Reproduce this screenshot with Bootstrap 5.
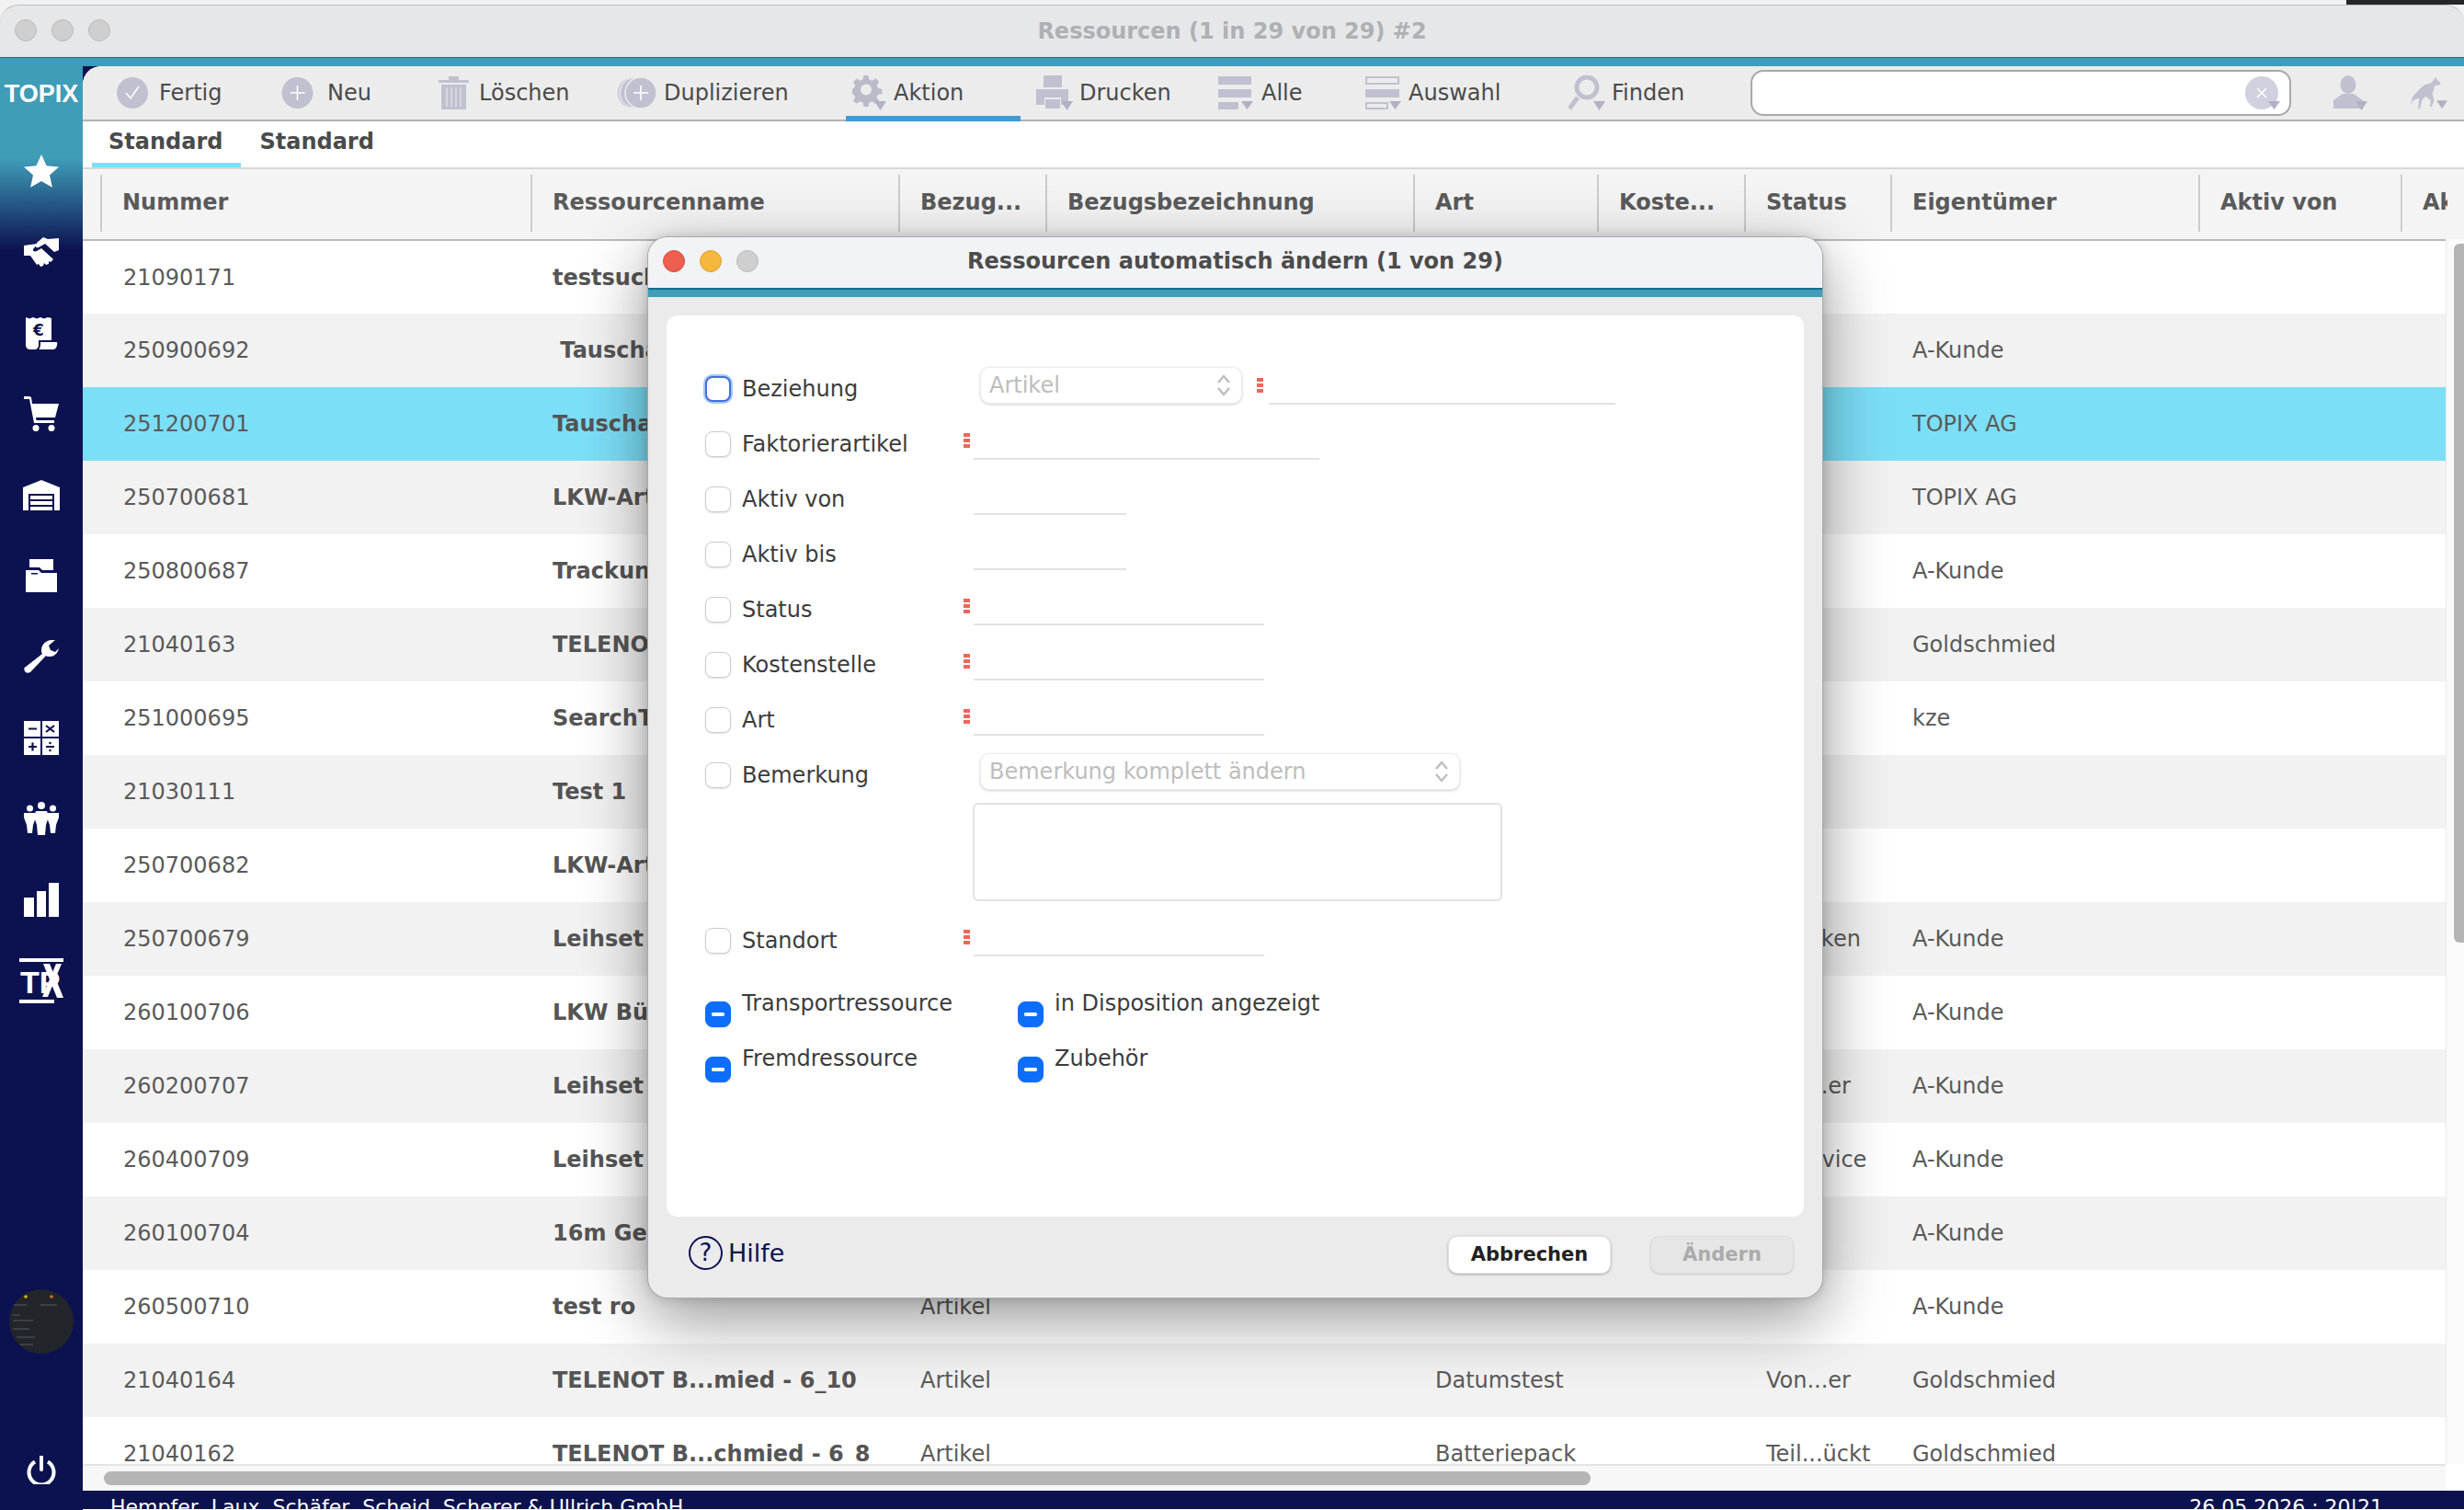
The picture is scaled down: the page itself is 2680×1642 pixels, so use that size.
<!DOCTYPE html>
<html lang="de">
<head>
<meta charset="UTF-8">
<title>Ressourcen</title>
<link href="https://cdn.jsdelivr.net/npm/bootstrap@5.3.1/dist/css/bootstrap.min.css" rel="stylesheet">
<style>
html,body{margin:0;padding:0;width:2680px;height:1642px;overflow:hidden}
body{position:relative;font-family:"DejaVu Sans",Verdana,sans-serif;font-size:24px;color:#565656;background:#f2f2f2}
.top-strip{height:5px;background:#f1f1f1}
.top-strip-dark{width:128px;background:#24272a}
.win-bar{height:57px;background:#e6e7e9;border-top:1px solid #bdbdbd;border-radius:20px 20px 0 0;position:relative;font-size:24px;font-weight:700;color:#aeb0b4;line-height:56px;margin-bottom:-1px}
.win-dots{position:absolute;left:16px;top:15px}
.mac-dot{width:24px;height:24px;border-radius:50%;background:#cfcfcf;border:1px solid #bbb;display:block}
.mac-red{background:#ee5f52;border-color:#d6493d}
.mac-yellow{background:#f5b73c;border-color:#dfa02a}
.teal-line{height:11px;background:#3f9db8;border-top:2px solid #146f8f}
.work{height:1570px;background:#0c1250}
.side-nav{width:90px;flex:none;background:linear-gradient(#3f9db8 0,#3f9db8 100px,#0c1250 200px);color:#fff}
.side-logo{height:70px;font-family:"Liberation Sans",sans-serif;font-weight:700;font-size:27px;line-height:60px;text-align:center}
.side-item{height:88px}
.side-avatar{height:70px;margin-bottom:82px}
.main-col{flex:1;min-width:0;border-top-left-radius:20px;overflow:hidden;background:#fff}
.tool-bar{height:60px;background:#ececec;border-bottom:2px solid #b2b2b2;display:grid;grid-template-columns:180px 171px 194px 256px 200px 198px 160px 221px 198px 588px 45px 85px 40px;padding-left:36px;position:relative}
.tool-item{color:#4a4a4a;line-height:58px;gap:7px}
.tool-item svg{flex:none}
.tool-mark{position:absolute;left:830px;top:54px;width:190px;height:6px;background:#3f9bd5}
.find-box{width:588px;height:50px;margin-top:4px;background:#fff;border:2px solid #a9a9a9;border-radius:14px;padding-right:10px}
.sub-tabs{height:52px;border-bottom:2px solid #d8d8d8;padding-left:28px;gap:40px;font-weight:700;color:#4a4a4a;line-height:44px;position:relative}
.sub-mark{position:absolute;left:10px;top:45px;width:162px;height:5px;background:#7cdff8}
.list-area{height:1408px;overflow:hidden;position:relative;background:#fff}
.res-table{table-layout:fixed;width:2590px;margin:0;--bs-table-bg:transparent;--bs-table-color:#565656;color:#565656}
.res-table>thead>tr>th{height:76px;padding:6px 0 8px;background:#f4f4f4;border-bottom:2px solid #bbb;font-weight:700;vertical-align:top}
.res-table>thead>tr>th:first-child{padding-left:19px}
.col-head{height:62px;line-height:60px;border-left:2px solid #ccc;padding-left:22px;white-space:nowrap;overflow:hidden;color:#5a5a5a}
.col-clip{width:51px}
.res-table>tbody>tr>td{height:80px;padding:0 0 0 24px;vertical-align:middle;white-space:nowrap;overflow:hidden;background:#fff;color:#5a5a5a}
.res-table>tbody>tr>td:first-child{padding-left:44px}
.res-table>tbody>tr:nth-child(even)>td{background:#f2f2f2}
.res-table>tbody>tr.row-picked>td{background:#7cdff8}
.res-table>tbody>tr>td.cell-name{font-weight:700;color:#555}
.v-track{position:absolute;right:0;top:76px;bottom:0;width:20px;background:#fafafa;border-left:1px solid #e8e8e8}
.v-thumb{position:absolute;top:5px;right:0;width:11px;height:760px;background:#b5b5b5;border-radius:6px 0 0 6px}
.h-track{height:30px;width:2570px;background:#f7f7f7;border-top:2px solid #e5e5e5;padding:6px 0 0 23px}
.h-thumb{width:1617px;height:15px;background:#b5b5b5;border-radius:8px}
.foot-bar{height:20px;background:#0b124d;color:#fff;font-size:22px;line-height:26px;padding-top:5px;padding-left:30px;padding-right:88px;overflow:hidden;white-space:nowrap;margin-top:-1px}
.foot-bar span{display:block}
.dlg{position:absolute;left:704px;top:257px;width:1279px;height:1155px;background:#ebebeb;border:1px solid rgba(0,0,0,.28);border-radius:22px;box-shadow:0 22px 70px rgba(0,0,0,.42),0 0 12px rgba(0,0,0,.15);overflow:hidden;z-index:5}
.dlg-head{height:55px;background:#f1f3f6;position:relative;text-align:center;font-weight:700;line-height:53px;color:#4c4c4c}
.dlg-dots{position:absolute;left:16px;top:14px;gap:16px}
.dlg-teal{height:10px;background:#3f9db8;border-top:2px solid #146f8f}
.dlg-panel{height:980px;margin:20px 20px 0;background:#fff;border-radius:12px;padding:50px 0 0 42px;color:#3c3c3c}
.fld-row{height:60px;display:flex}
.fld-check{width:28px;height:28px;margin:16px 12px 0 0!important;flex:none;border-radius:8px!important;border:1.5px solid #cdcdcd;box-shadow:0 1px 2px rgba(0,0,0,.12)}
.fld-check:indeterminate{background-color:#2a76f6;border-color:#2a76f6;--bs-form-check-bg-image:url("data:image/svg+xml,%3csvg xmlns='http://www.w3.org/2000/svg' viewBox='0 0 20 20'%3e%3cpath fill='none' stroke='%23fff' stroke-linecap='round' stroke-width='3.6' d='M4.5 10h11'/%3e%3c/svg%3e")}
.fld-focus{border:2px solid #3f6fe0;box-shadow:0 0 0 2px #a8c4fb}
.fld-label{width:240px;flex:none;line-height:60px}
.req-dots{width:7px;height:16px;margin:18px 4px 0 1px;flex:none;background:repeating-linear-gradient(#f0655a 0 4px,transparent 4px 6px)}
.no-dots{width:12px;flex:none}
.line-input{height:47px;padding:0;border:0;border-bottom:2px solid #e2e2e2;border-radius:0;background:transparent;flex:none}
.w-rel{width:377px;margin-left:2px}
.w-fak{width:376px}
.w-date{width:166px}
.w-std{width:316px}
.mac-select{height:40px;margin-top:6px;padding:0 0 0 9px;font-size:24px;line-height:36px;color:#bdbdbd!important;background-color:#fff!important;border:1px solid #ededed;border-radius:10px;box-shadow:0 1px 3px rgba(0,0,0,.18);flex:none;background-position:right 10px center;background-size:18px 26px;background-image:url("data:image/svg+xml,%3csvg xmlns='http://www.w3.org/2000/svg' viewBox='0 0 18 26'%3e%3cpath fill='none' stroke='%23bdbdbd' stroke-width='2.4' d='M3 10l6-7 6 7M3 16l6 7 6-7'/%3e%3c/svg%3e")}
.sel-rel{width:285px;margin-left:19px;margin-right:15px}
.sel-bem{width:522px;margin-left:19px}
.mac-note{display:block;width:576px;height:107px;margin:0 0 13px 291px;border:2px solid #e2e2e2;border-radius:6px;resize:none}
.tri-block{margin-top:20px}
.tri-col{width:340px;display:flex}
.dlg-foot{height:90px;padding:21px 31px 0 44px}
.help-link{color:#0c1250;font-size:27px;line-height:36px;gap:6px;text-decoration:none}
.help-ring{width:37px;height:37px;border:2px solid #0c1250;border-radius:50%;text-align:center;font-size:26px;line-height:33px;display:block}
.mac-btn{height:41px;padding:0;font-size:21px;font-weight:700;line-height:39px;border-radius:10px;background:#fff;color:#222;border:1px solid #e2e2e2;box-shadow:0 1px 3px rgba(0,0,0,.3)}
.btn-cancel{width:177px;margin-right:43px}
.btn-apply{width:156px}
.btn-apply:disabled{background:#e6e6e6;color:#ababab;border-color:#dedede;box-shadow:0 1px 2px rgba(0,0,0,.15);opacity:1}
</style>
</head>
<body>
<div class="top-strip d-flex justify-content-end"><div class="top-strip-dark"></div></div>
<div class="win-bar text-center">
  <div class="win-dots d-flex gap-3"><span class="mac-dot"></span><span class="mac-dot"></span><span class="mac-dot"></span></div>
  Ressourcen (1 in 29 von 29) #2
</div>
<div class="teal-line"></div>
<div class="work d-flex">
  <nav class="side-nav d-flex flex-column">
    <div class="side-logo">TOPIX</div>
    <div class="side-item d-flex align-items-center justify-content-center"><svg width="38" height="36" viewBox="0 0 38 36" fill="#fff"><path d="M19 0l5.6 12.2 13.4 1.4-10 9 2.9 13.2L19 29l-11.900 6.800L10 22.600 0 13.600l13.400-1.400z"/></svg></div>
    <div class="side-item d-flex align-items-center justify-content-center"><svg width="38" height="33" viewBox="0 0 38 33" fill="#fff"><path d="M0 9l7-1 8-1-5 6c-1 2 2 3 4 2l5-3 13 12-3 3-2-1 0 3-3 1-2-2-1 3-3 1-2-3-2 1L7 20H0z"/><path d="M14 6l7-6 5 2 12-1v13l-5 2-10-9-7 4c-3 1-4-1-2-5z"/></svg></div>
    <div class="side-item d-flex align-items-center justify-content-center"><svg width="36" height="36" viewBox="0 0 36 36"><path fill="#fff" d="M1 1l4 1.500L9 1l4 1.500L17 1l4 1.500L25 1l4 1v24H15v5c0 2-1 4-3 5H6c-3 0-5-2-5-5z"/><path fill="#fff" d="M17 28h18c1 3-1 8-4 8H15c2-1 2-5 2-8z"/><text x="15" y="21" font-family="DejaVu Sans" font-size="17" font-weight="700" text-anchor="middle" fill="#0c1250">€</text></svg></div>
    <div class="side-item d-flex align-items-center justify-content-center"><svg width="38" height="38" viewBox="0 0 38 38" fill="#fff"><path d="M0 0h6l2 1 1 7h29l-4 15H13l.5 3H33v3H11L6 3H0z"/><circle cx="13" cy="34.500" r="3.500"/><circle cx="30" cy="34.500" r="3.500"/></svg></div>
    <div class="side-item d-flex align-items-center justify-content-center"><svg width="40" height="33" viewBox="0 0 40 33" fill="#fff"><path d="M0 8L20 0l20 8v25h-6V15H6v18H0z"/><path d="M8 17h24v4H8zM8 23h24v4H8zM8 29h24v4H8z"/></svg></div>
    <div class="side-item d-flex align-items-center justify-content-center"><svg width="34" height="36" viewBox="0 0 34 36" fill="#fff"><path d="M4 0h26v12H18l-3-3H4z"/><path d="M0 12h14l3 3h17v21H0z"/><path d="M6 15h7v1.500H6z" fill="#0c1250"/></svg></div>
    <div class="side-item d-flex align-items-center justify-content-center"><svg width="38" height="36" viewBox="0 0 38 36" fill="#fff"><path d="M38 7c0 6-4 11-10 11-2 0-3 0-4-1L7 35c-2 1-5 1-6-1s-1-4 1-5l18-14c-1-1-1-3-1-4 0-6 5-11 11-11h4l-7 6 2 5 5 2 6-6z"/></svg></div>
    <div class="side-item d-flex align-items-center justify-content-center"><svg width="38" height="37" viewBox="0 0 38 37"><g fill="#fff"><path d="M0 0h18v17H0zM20 0h18v17H20zM0 19h18v18H0zM20 19h18v18H20z"/></g><path d="M5 8.500h9M24 5l9 7M33 5l-9 7M5 28h9M9.500 23.500v9M24 28h9" stroke="#0c1250" stroke-width="2.200"/><circle cx="28.500" cy="24" r="1.300" fill="#0c1250"/><circle cx="28.500" cy="32" r="1.300" fill="#0c1250"/></svg></div>
    <div class="side-item d-flex align-items-center justify-content-center"><svg width="38" height="36" viewBox="0 0 38 36" fill="#fff"><circle cx="6.500" cy="7" r="3.500"/><circle cx="19" cy="4" r="4"/><circle cx="31.500" cy="7" r="3.500"/><path d="M0 12h12l1 5-3 8-1 9H4l-1-9-3-8z"/><path d="M13 10h12l2 6-3 9-1 11h-8l-1-11-3-9z"/><path d="M26 12h12v5l-3 8-1 9h-5l-1-9-3-8z"/></svg></div>
    <div class="side-item d-flex align-items-center justify-content-center"><svg width="38" height="37" viewBox="0 0 38 37" fill="#fff"><path d="M0 16h11v21H0zM14 9h10v28H14zM27 0h11v37H27z"/></svg></div>
    <div class="side-item d-flex align-items-center justify-content-center"><svg width="48" height="49" viewBox="0 0 48 49" fill="#fff"><path d="M0 0h48v4H0zM0 45h38v4H0z"/><path d="M26 6h7l15 37h-7z"/><text x="1" y="38" font-family="Liberation Sans" font-size="34" font-weight="700">TP</text><path d="M46 6h-6L25 42h6z"/></svg></div>
    <div class="side-avatar mt-auto d-flex justify-content-center"><svg width="70" height="70" viewBox="0 0 70 70"><circle cx="35" cy="35" r="35" fill="#22262a"/><circle cx="18" cy="8" r="1.800" fill="#e0b020"/><circle cx="46" cy="8" r="1.800" fill="#d8701c"/><path d="M5 17h14M34 17h18M4 28h8M4 34h22M4 43h18M8 52h20M12 60h14" stroke="#565a5e" stroke-width="1"/></svg></div>
    <div class="side-item d-flex align-items-center justify-content-center"><svg width="32" height="31" viewBox="0 0 32 31" fill="none" stroke="#fff" stroke-width="4"><path d="M9 6.500a13.500 13.500 0 1 0 14 0"/><path d="M16 0v15" stroke-linecap="round"/></svg></div>
  </nav>
  <div class="main-col d-flex flex-column">
    <div class="tool-bar">
      <div class="tool-item d-flex align-items-center"><svg width="36" height="36" viewBox="0 0 36 36"><circle cx="18" cy="18" r="17" fill="#bfc1d0"/><path d="M11 18l5 6 9-13" fill="none" stroke="#fff" stroke-width="1.600"/></svg><span class="ms-1">Fertig</span></div>
      <div class="tool-item d-flex align-items-center"><svg width="35" height="36" viewBox="0 0 35 36"><circle cx="17.500" cy="18" r="17" fill="#bfc1d0"/><path d="M17.500 10v16M9.500 18h16" stroke="#fff" stroke-width="1.600"/></svg><span class="ms-2">Neu</span></div>
      <div class="tool-item d-flex align-items-center"><svg width="33" height="36" viewBox="0 0 33 36" fill="#bfc1d0"><path d="M0 4h11V0h11v4h11v3H0zM3 9h27v27H3z"/><path d="M9 12v21M14 12v21M19 12v21M24 12v21" stroke="#ececec" stroke-width="1"/></svg><span class="ms-1">Löschen</span></div>
      <div class="tool-item d-flex align-items-center"><svg width="44" height="36" viewBox="0 0 44 36"><circle cx="17" cy="18" r="16.500" fill="#cfd0db"/><circle cx="20" cy="18" r="16.500" fill="#bfc1d0" stroke="#ececec" stroke-width="1"/><circle cx="26" cy="18" r="17" fill="#bfc1d0" stroke="#ececec" stroke-width="1.500"/><path d="M26 10v16M18 18h16" stroke="#fff" stroke-width="1.600"/></svg><span>Duplizieren</span></div>
      <div class="tool-item d-flex align-items-center"><svg width="38" height="38" viewBox="0 0 38 38" fill="#b9bbc9"><path d="M15 0h6l1 5 4 2 5-3 4 5-3 4 2 4 5 1v6l-5 1-2 4 3 4-5 4-4-3-4 2-1 5h-6l-1-5-4-2-4 3-5-4 3-4-2-4-5-1v-6l5-1 2-4-3-4 5-5 4 3 4-2z" transform="scale(.83)"/><circle cx="15" cy="15.500" r="6" fill="#ececec"/><path d="M24 28h13l-6.500 10z" fill="#b0b2c4"/></svg><span>Aktion</span></div>
      <div class="tool-item d-flex align-items-center"><svg width="40" height="38" viewBox="0 0 40 38" fill="#bfc1d0"><path d="M8 0h20v13H8zM0 15h35v17h-8v-8H9v8H0zM10 26h16v10H10z"/><path d="M27 28h13l-6.500 10z" fill="#b0b2c4"/></svg><span>Drucken</span></div>
      <div class="tool-item d-flex align-items-center"><svg width="40" height="36" viewBox="0 0 40 36" fill="#bfc1d0"><path d="M0 0h36v9H0zM0 14h36v9H0zM0 28h22v8H0z"/><path d="M25 27h13l-6.500 9z" fill="#b0b2c4"/></svg><span>Alle</span></div>
      <div class="tool-item d-flex align-items-center"><svg width="40" height="36" viewBox="0 0 40 36"><path d="M1 1h35v7H1zM1 29h23v6H1z" fill="none" stroke="#bfc1d0" stroke-width="2"/><path d="M0 14h37v9H0z" fill="#bfc1d0"/><path d="M26 27h13l-6.500 9z" fill="#b0b2c4"/></svg><span>Auswahl</span></div>
      <div class="tool-item d-flex align-items-center"><svg width="40" height="38" viewBox="0 0 40 38"><circle cx="20" cy="13" r="11" fill="none" stroke="#bfc1d0" stroke-width="5"/><path d="M10 24L1 36" stroke="#bfc1d0" stroke-width="5"/><path d="M27 28h13l-6.500 10z" fill="#b0b2c4"/></svg><span>Finden</span></div>
      <div class="find-box d-flex align-items-center justify-content-end"><svg width="38" height="36" viewBox="0 0 38 36"><circle cx="18" cy="18" r="18" fill="#cfd1de"/><path d="M13 13l10 10M23 13L13 23" stroke="#fff" stroke-width="1.600"/><path d="M25 27h13l-6.500 9z" fill="#b0b2c4"/></svg></div>
      <div></div>
      <div class="d-flex align-items-center justify-content-start"><svg width="38" height="38" viewBox="0 0 38 38" fill="#bfc1d0"><ellipse cx="17" cy="10" rx="8.500" ry="10"/><path d="M11 20h12l10 7v9H1v-9z"/><path d="M25 28h13l-6.500 10z" fill="#b0b2c4"/></svg></div>
      <div class="d-flex align-items-center"><svg width="44" height="38" viewBox="0 0 44 38" fill="#bfc1d0"><path d="M30 0l2 4 4 3-2 3-5 0-3 10 2 8-3 8-2-1 1-7-6-5-4 4-3 11H9l1-13-7 3-3 5 2-9 8-9 7-6 8-2z"/><path d="M31 28h13l-6.500 10z" fill="#b0b2c4"/></svg></div>
      <div class="tool-mark"></div>
    </div>
    <div class="sub-tabs d-flex">
      <span>Standard</span><span>Standard</span>
      <div class="sub-mark"></div>
    </div>
    <div class="list-area">
      <table class="table table-borderless res-table">
        <colgroup><col width="487"><col width="400"><col width="160"><col width="400"><col width="200"><col width="160"><col width="159"><col width="335"><col width="220"><col width="69"></colgroup>
        <thead><tr>
          <th><div class="col-head">Nummer</div></th><th><div class="col-head">Ressourcenname</div></th><th><div class="col-head">Bezug...</div></th><th><div class="col-head">Bezugsbezeichnung</div></th><th><div class="col-head">Art</div></th><th><div class="col-head">Koste...</div></th><th><div class="col-head">Status</div></th><th><div class="col-head">Eigentümer</div></th><th><div class="col-head">Aktiv von</div></th><th><div class="col-head col-clip">Aktiv bis</div></th>
        </tr></thead>
        <tbody>
          <tr><td>21090171</td><td class="cell-name">testsuche</td><td></td><td></td><td></td><td></td><td></td><td></td><td></td><td></td></tr>
          <tr><td>250900692</td><td class="cell-name">&nbsp;Tauschartikel</td><td></td><td></td><td></td><td></td><td></td><td>A-Kunde</td><td></td><td></td></tr>
          <tr class="row-picked"><td>251200701</td><td class="cell-name">Tauschartikel</td><td></td><td></td><td></td><td></td><td></td><td>TOPIX AG</td><td></td><td></td></tr>
          <tr><td>250700681</td><td class="cell-name">LKW-Artikel</td><td></td><td></td><td></td><td></td><td></td><td>TOPIX AG</td><td></td><td></td></tr>
          <tr><td>250800687</td><td class="cell-name">Trackunit</td><td></td><td></td><td></td><td></td><td></td><td>A-Kunde</td><td></td><td></td></tr>
          <tr><td>21040163</td><td class="cell-name">TELENOT</td><td></td><td></td><td></td><td></td><td></td><td>Goldschmied</td><td></td><td></td></tr>
          <tr><td>251000695</td><td class="cell-name">SearchTest</td><td></td><td></td><td></td><td></td><td></td><td>kze</td><td></td><td></td></tr>
          <tr><td>21030111</td><td class="cell-name">Test 1</td><td></td><td></td><td></td><td></td><td></td><td></td><td></td><td></td></tr>
          <tr><td>250700682</td><td class="cell-name">LKW-Artikel</td><td></td><td></td><td></td><td></td><td></td><td></td><td></td><td></td></tr>
          <tr><td>250700679</td><td class="cell-name">Leihset</td><td></td><td></td><td></td><td></td><td>Ver...ken</td><td>A-Kunde</td><td></td><td></td></tr>
          <tr><td>260100706</td><td class="cell-name">LKW Bühne</td><td></td><td></td><td></td><td></td><td></td><td>A-Kunde</td><td></td><td></td></tr>
          <tr><td>260200707</td><td class="cell-name">Leihset</td><td></td><td></td><td></td><td></td><td>Von...er</td><td>A-Kunde</td><td></td><td></td></tr>
          <tr><td>260400709</td><td class="cell-name">Leihset</td><td></td><td></td><td></td><td></td><td>Ser...vice</td><td>A-Kunde</td><td></td><td></td></tr>
          <tr><td>260100704</td><td class="cell-name">16m Gerüst</td><td></td><td></td><td></td><td></td><td></td><td>A-Kunde</td><td></td><td></td></tr>
          <tr><td>260500710</td><td class="cell-name">test ro</td><td>Artikel</td><td></td><td></td><td></td><td></td><td>A-Kunde</td><td></td><td></td></tr>
          <tr><td>21040164</td><td class="cell-name">TELENOT B...mied - 6_10</td><td>Artikel</td><td></td><td>Datumstest</td><td></td><td>Von...er</td><td>Goldschmied</td><td></td><td></td></tr>
          <tr><td>21040162</td><td class="cell-name">TELENOT B...chmied - 6_8</td><td>Artikel</td><td></td><td>Batteriepack</td><td></td><td>Teil...ückt</td><td>Goldschmied</td><td></td><td></td></tr>
        </tbody>
      </table>
      <div class="v-track"><div class="v-thumb"></div></div>
    </div>
    <div class="h-track"><div class="h-thumb"></div></div>
    <div class="foot-bar d-flex justify-content-between"><span>Hempfer, Laux, Schäfer, Scheid, Scherer &amp; Ullrich GmbH</span><span>26.05.2026 : 20|21</span></div>
  </div>
</div>

<div class="dlg">
  <div class="dlg-head">
    <div class="dlg-dots d-flex"><span class="mac-dot mac-red"></span><span class="mac-dot mac-yellow"></span><span class="mac-dot"></span></div>
    Ressourcen automatisch ändern (1 von 29)
  </div>
  <div class="dlg-teal"></div>
  <div class="dlg-panel">
    <div class="fld-row"><input class="form-check-input fld-check fld-focus" type="checkbox"><span class="fld-label">Beziehung</span><select class="form-select mac-select sel-rel" disabled><option>Artikel</option></select><span class="req-dots"></span><input class="form-control line-input w-rel" type="text"></div>
    <div class="fld-row"><input class="form-check-input fld-check" type="checkbox"><span class="fld-label">Faktorierartikel</span><span class="req-dots"></span><input class="form-control line-input w-fak" type="text"></div>
    <div class="fld-row"><input class="form-check-input fld-check" type="checkbox"><span class="fld-label">Aktiv von</span><span class="no-dots"></span><input class="form-control line-input w-date" type="text"></div>
    <div class="fld-row"><input class="form-check-input fld-check" type="checkbox"><span class="fld-label">Aktiv bis</span><span class="no-dots"></span><input class="form-control line-input w-date" type="text"></div>
    <div class="fld-row"><input class="form-check-input fld-check" type="checkbox"><span class="fld-label">Status</span><span class="req-dots"></span><input class="form-control line-input w-std" type="text"></div>
    <div class="fld-row"><input class="form-check-input fld-check" type="checkbox"><span class="fld-label">Kostenstelle</span><span class="req-dots"></span><input class="form-control line-input w-std" type="text"></div>
    <div class="fld-row"><input class="form-check-input fld-check" type="checkbox"><span class="fld-label">Art</span><span class="req-dots"></span><input class="form-control line-input w-std" type="text"></div>
    <div class="fld-row"><input class="form-check-input fld-check" type="checkbox"><span class="fld-label">Bemerkung</span><select class="form-select mac-select sel-bem" disabled><option>Bemerkung komplett ändern</option></select></div>
    <textarea class="form-control mac-note"></textarea>
    <div class="fld-row"><input class="form-check-input fld-check" type="checkbox"><span class="fld-label">Standort</span><span class="req-dots"></span><input class="form-control line-input w-std" type="text"></div>
    <div class="tri-block">
      <div class="fld-row"><div class="tri-col"><input class="form-check-input fld-check tri-box" type="checkbox"><span>Transportressource</span></div><div class="tri-col"><input class="form-check-input fld-check tri-box" type="checkbox"><span>in Disposition angezeigt</span></div></div>
      <div class="fld-row"><div class="tri-col"><input class="form-check-input fld-check tri-box" type="checkbox"><span>Fremdressource</span></div><div class="tri-col"><input class="form-check-input fld-check tri-box" type="checkbox"><span>Zubehör</span></div></div>
    </div>
  </div>
  <div class="dlg-foot d-flex align-items-start">
    <a class="help-link d-flex align-items-center me-auto" href="#"><span class="help-ring">?</span>Hilfe</a>
    <button type="button" class="btn mac-btn btn-cancel">Abbrechen</button>
    <button type="button" class="btn mac-btn btn-apply" disabled>Ändern</button>
  </div>
</div>

<script src="https://cdn.jsdelivr.net/npm/bootstrap@5.3.1/dist/js/bootstrap.bundle.min.js"></script>
<script>
document.querySelectorAll(".tri-box").forEach(function(box) {
    box.indeterminate = true;
});
</script>
</body>
</html>
